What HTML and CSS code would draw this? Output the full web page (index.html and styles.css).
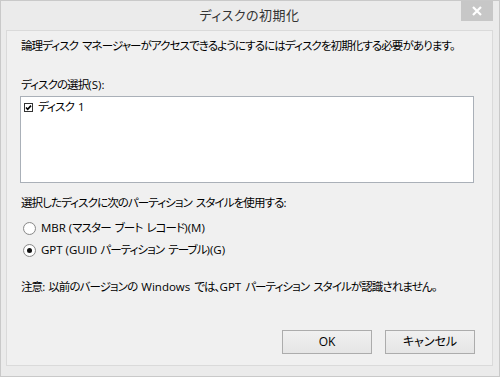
FILE: index.html
```html
<!DOCTYPE html>
<html lang="ja">
<head>
<meta charset="utf-8">
<title>ディスクの初期化</title>
<link rel="stylesheet" href="styles.css">
</head>
<body>
<div class="window">
    <div class="titlebar">
        <span></span>
        <span class="title">ディスクの初期化</span>
        <a href="#close" class="close" title="閉じる">
            <svg width="12" height="10" viewBox="0 0 12 10"><path d="M2 1 L10 9 M10 1 L2 9" stroke="#fff" stroke-width="2.2"/></svg>
        </a>
    </div>
    <div class="client">
        <p class="intro">論理ディスク マネージャーがアクセスできるようにするにはディスクを初期化する必要があります。</p>

        <p class="label">ディスクの選択<span class="en">(S):</span></p>
        <div class="listbox">
            <div class="item">
                <svg class="check" width="11" height="11" viewBox="0 0 11 11">
                    <rect x="1.5" y="1.5" width="8" height="8" fill="#fff" stroke="#333"/>
                    <path d="M3 5.5 L4.7 7.3 L8 3.6" fill="none" stroke="#000" stroke-width="1.6"/>
                </svg>
                <span>ディスク <span class="en">1</span></span>
            </div>
        </div>

        <p class="label section">選択したディスクに次のパーティション スタイルを使用する<span class="en">:</span></p>
        <div class="options">
            <label class="option"><span class="radio"></span><span><span class="en">MBR (</span>マスター ブート レコード<span class="en">)(M)</span></span></label>
            <label class="option"><span class="radio on"></span><span><span class="en">GPT (GUID </span>パーティション テーブル<span class="en">)(G)</span></span></label>
        </div>

        <p class="note">注意<span class="en">: </span>以前のバージョンの <span class="en">Windows</span> では、<span class="en">GPT</span> パーティション スタイルが認識されません。</p>

        <div class="buttons">
            <button class="btn">OK</button>
            <button class="btn">キャンセル</button>
        </div>
    </div>
</div>
</body>
</html>
```

FILE: styles.css
```css
body {
    margin: 0;
    background: #fff;
}

.window {
    width: 500px;
    height: 377px;
    box-sizing: border-box;
    border: 1px solid #c9c9c9;
    background: #ebebeb;
    padding: 0 6px 10px 5px;
    display: flex;
    flex-direction: column;
    font-family: "Open Sans", "Noto Sans CJK JP", sans-serif;
    font-feature-settings: "palt";
    color: #000;
}

.titlebar {
    height: 29px;
    display: grid;
    grid-template-columns: 1fr auto 1fr;
    align-items: start;
}

.title {
    margin-top: 5px;
    font-size: 13px;
    line-height: 18px;
    color: #333;
    letter-spacing: 0.5px;
}

.close {
    justify-self: end;
    width: 32px;
    height: 20px;
    background: #c7c7c7;
    display: flex;
    align-items: center;
    justify-content: center;
}

.client {
    flex: 1;
    border: 1px solid #dadada;
    background: #f0f0f0;
    padding: 7px 17px 11px 14px;
    display: flex;
    flex-direction: column;
    font-size: 11.5px;
    line-height: 16px;
    letter-spacing: -0.9px;
    word-spacing: 2px;
    white-space: nowrap;
}

.en {
    letter-spacing: 0;
    word-spacing: 0;
}

p {
    margin: 0;
}

.label {
    margin-top: 23px;
}

.label.section {
    margin-top: 12px;
}

.listbox {
    width: 450px;
    height: 83px;
    margin: 3px 0 0 -1px;
    border: 1px solid #aab0b8;
    background: #fff;
    padding: 2px 0 0 2px;
    box-sizing: content-box;
}

.item {
    display: flex;
    align-items: center;
    gap: 4px;
}

.options {
    margin-top: 6px;
    display: flex;
    flex-direction: column;
}

.option {
    height: 22px;
    display: flex;
    align-items: center;
    gap: 5px;
    padding-left: 2px;
}

.radio {
    width: 11px;
    height: 11px;
    border: 1px solid #8a8a8a;
    border-radius: 50%;
    background: radial-gradient(circle, #fff 55%, #ececec);
    display: flex;
    align-items: center;
    justify-content: center;
}

.radio.on::after {
    content: "";
    width: 5px;
    height: 5px;
    border-radius: 50%;
    background: #111;
}

.note {
    margin-top: 18px;
}

.buttons {
    margin-top: auto;
    display: flex;
    justify-content: flex-end;
    gap: 13px;
}

.btn {
    width: 90px;
    height: 24px;
    border: 1px solid #acacac;
    background: linear-gradient(#f0f0f0, #e5e5e5);
    font: inherit;
    font-size: 12px;
    letter-spacing: 0;
    word-spacing: 0;
    color: #000;
    padding: 0;
}
```
